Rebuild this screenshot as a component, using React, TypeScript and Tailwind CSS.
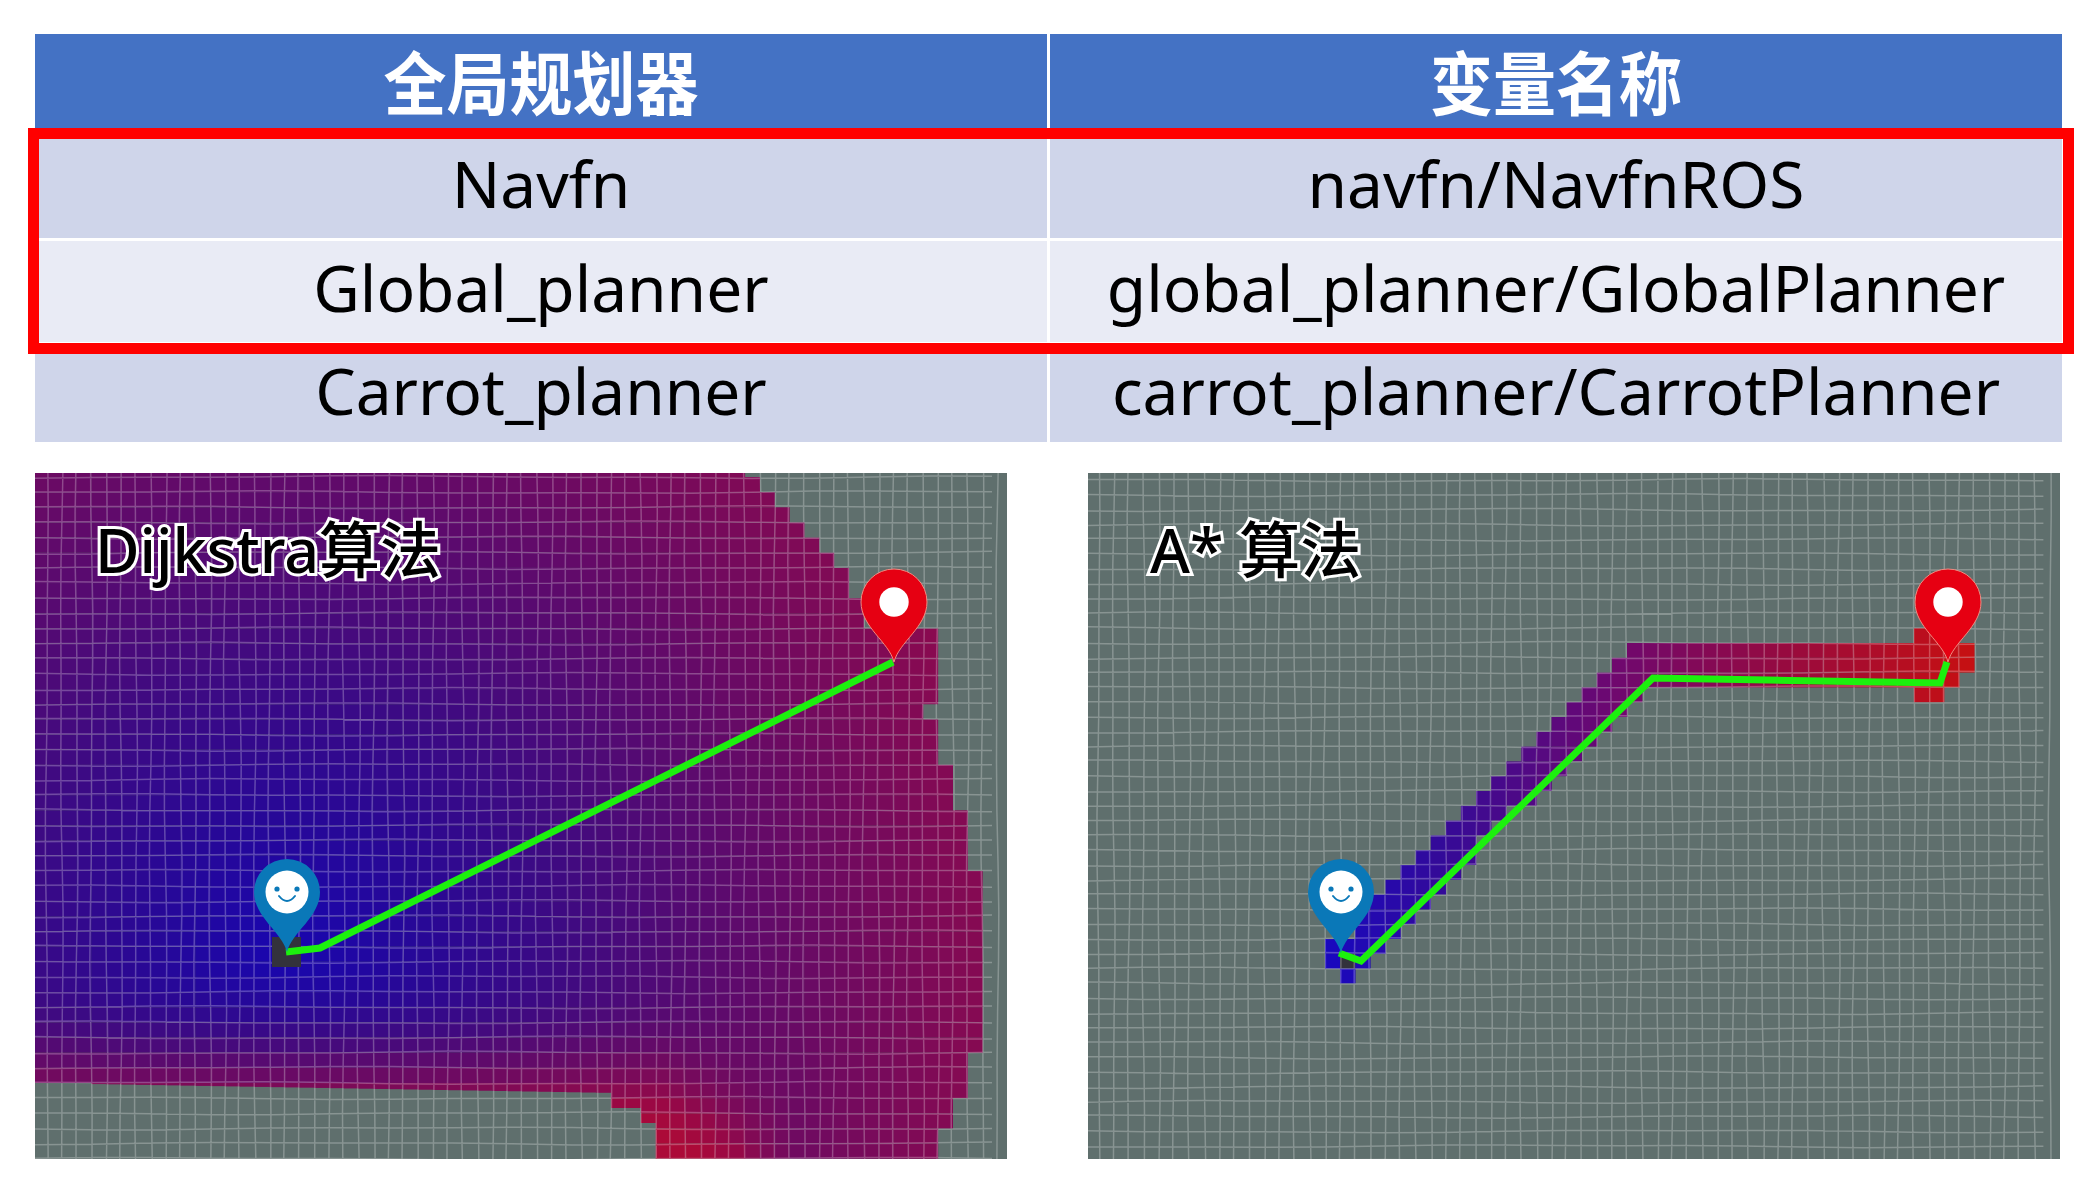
type Cell = { x: number; y: number; w: number; h: number; fill: string };
type Stop = [number, [number, number, number]];

const rows = [
  ["Navfn", "navfn/NavfnROS", "bg-[#cfd5ea]", "pb-[2px]"],
  ["Global_planner", "global_planner/GlobalPlanner", "bg-[#e9ebf5]", "pb-2"],
  ["Carrot_planner", "carrot_planner/CarrotPlanner", "bg-[#cfd5ea]", "pb-[6px]"],
];

function mix(stops: Stop[], t: number) {
  let a = stops[0];
  let b = stops[stops.length - 1];
  if (t <= a[0]) b = a;
  else if (t >= b[0]) a = b;
  else {
    for (let i = 0; i < stops.length - 1; i++) {
      if (t >= stops[i][0] && t <= stops[i + 1][0]) {
        a = stops[i];
        b = stops[i + 1];
        break;
      }
    }
  }
  const k = a === b ? 0 : (t - a[0]) / (b[0] - a[0]);
  const c = a[1].map((v, i) => Math.round(v + (b[1][i] - v) * k));
  return `rgb(${c[0]},${c[1]},${c[2]})`;
}

// Dijkstra: colour goes with the distance from the start pin
const leftStops: Stop[] = [
  [0, [24, 6, 176]],
  [0.2, [40, 8, 150]],
  [0.4, [62, 10, 130]],
  [0.6, [88, 10, 112]],
  [0.8, [112, 10, 96]],
  [1, [134, 10, 82]],
  [1.15, [152, 8, 70]],
  [1.5, [172, 10, 56]],
];
const rightEdges: [number, number][] = [
  [477, 746], [492, 761], [507, 776], [522, 790], [537, 805], [552, 820], [567, 835],
  [597, 850], [632, 865], [705, 940], [720, 924], [767, 940], [812, 953], [873, 967],
  [1053, 982], [1098, 963], [1128, 947], [1200, 932],
];

function bottomEdge(x: number) {
  if (x < 615) return 1083 + (x - 35) * 0.0172;
  if (x < 645) return 1108;
  if (x < 660) return 1123;
  return 1200;
}

function dijkstraCells() {
  const out: Cell[] = [];
  const dx = 14.85;
  const dy = 15.15;
  for (let r = 0; r < 47; r++) {
    const y = 461.85 + r * dy;
    const limit = rightEdges.find((e) => y + dy / 2 < e[0])?.[1] ?? 0;
    for (let c = 0; c < 68; c++) {
      const x = 32 + c * dx;
      const cx = x + dx / 2;
      const edge = bottomEdge(cx);
      if (cx > limit || y >= edge - 1) continue;
      const up = y + dy / 2 - 950;
      const fade = Math.min(1, Math.max(0, (800 - cx) / 140));
      const eff = up > 0 ? up + (up * up * fade) / 40 : up;
      const d = Math.sqrt((cx - 285) * (cx - 285) + eff * eff);
      out.push({ x, y, w: dx, h: Math.min(dy, edge - y), fill: mix(leftStops, d / 700) });
    }
  }
  return out;
}

// A*: spans of the searched band, by grid row
const bandStops: Stop[] = [
  [0, [24, 8, 192]],
  [0.18, [52, 10, 152]],
  [0.44, [110, 8, 112]],
  [0.7, [150, 10, 64]],
  [1, [200, 16, 16]],
];
const band: Record<number, [number, number][]> = {
  11: [[1918, 1947]],
  12: [[1632, 1977]],
  13: [[1616, 1977]],
  14: [[1600, 1962]],
  15: [[1585, 1645], [1918, 1947]],
  16: [[1570, 1630]],
  17: [[1555, 1613]],
  18: [[1540, 1598]],
  19: [[1525, 1583]],
  20: [[1510, 1568]],
  21: [[1495, 1553]],
  22: [[1480, 1538]],
  23: [[1465, 1507]],
  24: [[1450, 1492]],
  25: [[1433, 1477]],
  26: [[1417, 1477]],
  27: [[1402, 1460]],
  28: [[1387, 1445]],
  29: [[1372, 1430]],
  30: [[1357, 1415]],
  31: [[1355, 1400]],
  32: [[1325, 1385]],
  33: [[1325, 1370]],
  34: [[1340, 1353]],
};

function astarCells() {
  const out: Cell[] = [];
  const dx = 15.1;
  const dy = 14.8;
  for (const key of Object.keys(band)) {
    const r = Number(key);
    const y = 465.4 + r * dy;
    for (const [from, to] of band[r]) {
      for (let c = 0; c < 66; c++) {
        const x = 1083.4 + c * dx;
        const cx = x + dx / 2;
        if (cx < from || cx > to) continue;
        const dark = r === 33 && cx > 1340 && cx < 1355;
        out.push({ x, y, w: dx, h: dy, fill: dark ? "#33323c" : mix(bandStops, (cx - 1325) / 652) });
      }
    }
  }
  return out;
}

// grid lines are slightly wavy in the picture
function gridPath(x0: number, y0: number, dx: number, dy: number) {
  const x1 = x0 + 990;
  const y1 = y0 + 710;
  let d = "";
  for (let i = 0; x0 + i * dx < x1; i++) {
    const x = x0 + i * dx;
    d += "M";
    for (let y = y0; y <= y1; y += 50) {
      d += `${(x + 1.1 * Math.sin(y / 90 + i * 1.7) + 0.5 * Math.sin(y / 37 + i * 0.9)).toFixed(1)} ${y} `;
    }
  }
  for (let i = 0; y0 + i * dy < y1; i++) {
    const y = y0 + i * dy;
    d += "M";
    for (let x = x0; x <= x1; x += 60) {
      d += `${x.toFixed(1)} ${(y + 1.1 * Math.sin(x / 110 + i * 1.3) + 0.5 * Math.sin(x / 43 + i * 2.1)).toFixed(1)} `;
    }
  }
  return d;
}

function pinPath(cx: number, cy: number, tip: number) {
  return `M${cx} ${tip}C${cx - 5} ${tip - 20} ${cx - 33} ${cy + 25} ${cx - 33} ${cy}A33 33 0 1 1 ${cx + 33} ${cy}C${cx + 33} ${cy + 25} ${cx + 5} ${tip - 20} ${cx} ${tip}Z`;
}

function BluePin({ cx, cy, tip }: { cx: number; cy: number; tip: number }) {
  return (
    <g>
      <path d={pinPath(cx, cy, tip)} fill="#0a78b8" />
      <circle cx={cx} cy={cy} r={21.5} fill="#fff" />
      <circle cx={cx - 10} cy={cy - 3} r={2.6} fill="#0a78b8" />
      <circle cx={cx + 10} cy={cy - 3} r={2.6} fill="#0a78b8" />
      <path d={`M${cx - 8} ${cy + 4}Q${cx} ${cy + 14} ${cx + 8} ${cy + 4}`} fill="none" stroke="#0a78b8" strokeWidth={2} strokeLinecap="round" />
    </g>
  );
}

function RedPin({ cx, cy, tip }: { cx: number; cy: number; tip: number }) {
  return (
    <g>
      <path d={pinPath(cx, cy, tip)} fill="#e60012" stroke="#f08a80" strokeWidth={1} />
      <circle cx={cx} cy={cy} r={14.7} fill="#fff" />
    </g>
  );
}

function Picture({ viewBox, cells, grid, label, labelClass, children }: {
  viewBox: string;
  cells: Cell[];
  grid: string;
  label: string;
  labelClass: string;
  children: React.ReactNode;
}) {
  return (
    <div className="relative h-[686px] w-[972px] overflow-hidden bg-[#5f6f6d]">
      <svg viewBox={viewBox} className="block h-full w-full blur-[0.6px]">
        {cells.map((c, i) => (
          <rect key={i} x={c.x} y={c.y} width={c.w + 0.3} height={c.h} fill={c.fill} />
        ))}
        <path d={grid} fill="none" stroke="#fff" strokeOpacity={0.26} strokeWidth={1.5} />
        {children}
      </svg>
      <span className={`absolute whitespace-nowrap text-[61px] font-medium leading-none text-black [font-family:'Noto_Sans','Noto_Sans_CJK_SC',sans-serif] [-webkit-text-stroke:6px_white] [paint-order:stroke_fill] ${labelClass}`}>
        {label}
      </span>
    </div>
  );
}

export default function App() {
  return (
    <div className="h-[1190px] w-[2096px] overflow-hidden bg-white px-[35px] pt-[34px] [font-family:'Noto_Sans','Noto_Sans_CJK_SC',sans-serif]">
      <div className="relative w-[2027px]">
        <div className="grid grid-cols-2 grid-rows-[95px_106px_101px_97px] gap-[3px]">
          <div className="flex items-center justify-center bg-[#4472c4] text-[63px] font-bold leading-none text-white">
            <span className="inline-block translate-y-[2px] scale-y-110">全局规划器</span>
          </div>
          <div className="flex items-center justify-center bg-[#4472c4] text-[63px] font-bold leading-none text-white">
            <span className="inline-block translate-y-[2px] scale-y-110">变量名称</span>
          </div>
          {rows.map((row) => [
            <div key={row[0]} className={`flex items-center justify-center text-[64px] leading-none text-black ${row[2]} ${row[3]}`}>{row[0]}</div>,
            <div key={row[1]} className={`flex items-center justify-center text-[64px] leading-none text-black ${row[2]} ${row[3]}`}>{row[1]}</div>,
          ])}
        </div>
        {/* red highlight over the first two rows */}
        <div className="absolute -left-[7px] -right-[12px] top-[94px] h-[226px] border-[11px] border-[#ff0000]" />
      </div>

      <div className="mt-[31px] flex gap-[81px]">
        <Picture
          viewBox="35 473 972 686"
          cells={dijkstraCells()}
          grid={gridPath(32, 461.85, 14.85, 15.15)}
          label="Dijkstra算法"
          labelClass="left-[60px] top-[46px]"
        >
          <rect x={272} y={937} width={29} height={30} fill="#33323c" />
          <polyline points="286,952 320,948 893,662" fill="none" stroke="#1cf00e" strokeWidth={7} />
          <BluePin cx={287} cy={892} tip={952} />
          <RedPin cx={894} cy={602} tip={662} />
        </Picture>
        <Picture
          viewBox="1088 473 972 686"
          cells={astarCells()}
          grid={gridPath(1083.4, 465.4, 15.1, 14.8)}
          label="A* 算法"
          labelClass="left-[62px] top-[46px]"
        >
          <polyline points="1339,953 1361,961 1653,678 1940,683 1947,662" fill="none" stroke="#1cf00e" strokeWidth={7} />
          <BluePin cx={1341} cy={892} tip={953} />
          <RedPin cx={1948} cy={602} tip={662} />
        </Picture>
      </div>
    </div>
  );
}
